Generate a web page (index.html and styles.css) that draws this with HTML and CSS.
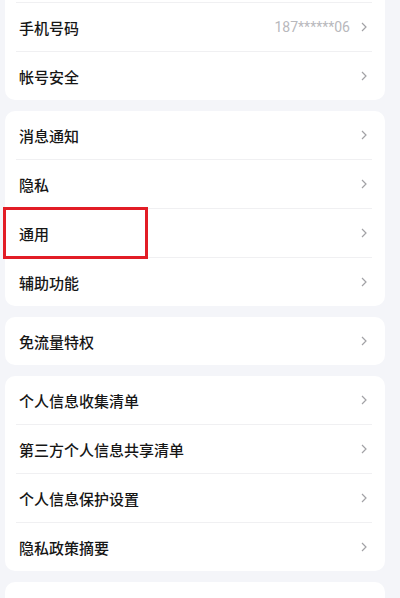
FILE: index.html
```html
<!DOCTYPE html>
<html lang="zh-CN">
<head>
    <meta charset="UTF-8">
    <meta name="viewport" content="width=device-width, initial-scale=1.0">
    <title>设置</title>
    <link rel="stylesheet" href="styles.css">
</head>
<body>
    <div class="page">
        <div class="card card-first">
            <div class="row"></div>
            <div class="row"><span class="label">手机号码</span><span class="value">187******06</span><svg class="chevron" viewBox="0 0 6 10"><path d="M1 1l4 4-4 4"/></svg></div>
            <div class="row"><span class="label">帐号安全</span><svg class="chevron" viewBox="0 0 6 10"><path d="M1 1l4 4-4 4"/></svg></div>
        </div>

        <div class="card">
            <div class="row"><span class="label">消息通知</span><svg class="chevron" viewBox="0 0 6 10"><path d="M1 1l4 4-4 4"/></svg></div>
            <div class="row"><span class="label">隐私</span><svg class="chevron" viewBox="0 0 6 10"><path d="M1 1l4 4-4 4"/></svg></div>
            <div class="row"><span class="label">通用</span><svg class="chevron" viewBox="0 0 6 10"><path d="M1 1l4 4-4 4"/></svg><div class="highlight"></div></div>
            <div class="row"><span class="label">辅助功能</span><svg class="chevron" viewBox="0 0 6 10"><path d="M1 1l4 4-4 4"/></svg></div>
        </div>

        <div class="card">
            <div class="row"><span class="label">免流量特权</span><svg class="chevron" viewBox="0 0 6 10"><path d="M1 1l4 4-4 4"/></svg></div>
        </div>

        <div class="card">
            <div class="row"><span class="label">个人信息收集清单</span><svg class="chevron" viewBox="0 0 6 10"><path d="M1 1l4 4-4 4"/></svg></div>
            <div class="row"><span class="label">第三方个人信息共享清单</span><svg class="chevron" viewBox="0 0 6 10"><path d="M1 1l4 4-4 4"/></svg></div>
            <div class="row"><span class="label">个人信息保护设置</span><svg class="chevron" viewBox="0 0 6 10"><path d="M1 1l4 4-4 4"/></svg></div>
            <div class="row"><span class="label">隐私政策摘要</span><svg class="chevron" viewBox="0 0 6 10"><path d="M1 1l4 4-4 4"/></svg></div>
        </div>

        <div class="card">
            <div class="row"></div>
        </div>
    </div>
</body>
</html>
```

FILE: styles.css
```css
body {
    margin: 0;
    background-color: #f4f5f9;
    font-family: "Noto Sans CJK SC", "Noto Sans", sans-serif;
    color: #161616;
    overflow: hidden;
}
.page {
    padding: 0 15px 0 5px;
    display: flex;
    flex-direction: column;
    gap: 11px;
}
.card {
    background: #fff;
    border-radius: 10px;
    display: flex;
    flex-direction: column;
}
.card-first {
    margin-top: -46px;
}
.row {
    height: 48px;
    display: flex;
    align-items: center;
    padding: 0 18px 0 14px;
    position: relative;
}
.row + .row::before {
    content: "";
    position: absolute;
    top: -1px;
    left: 11px;
    right: 13px;
    height: 1px;
    background: #f0f0f2;
}
.row + .row {
    margin-top: 1px;
}
.label {
    font-size: 15px;
    font-weight: 500;
    flex: 1;
}
.value {
    font-family: "Roboto", "Noto Sans", sans-serif;
    font-size: 14px;
    color: #b8b8bc;
    margin-right: 11px;
}
.chevron {
    width: 6px;
    height: 10px;
    fill: none;
    stroke: #a2a2a6;
    stroke-width: 1.2;
}
/* red annotation box over the row */
.highlight {
    position: absolute;
    z-index: 1;
    left: -2px;
    top: -2px;
    width: 145px;
    height: 52px;
    box-sizing: border-box;
    border: 3px solid #e21d26;
}
```
